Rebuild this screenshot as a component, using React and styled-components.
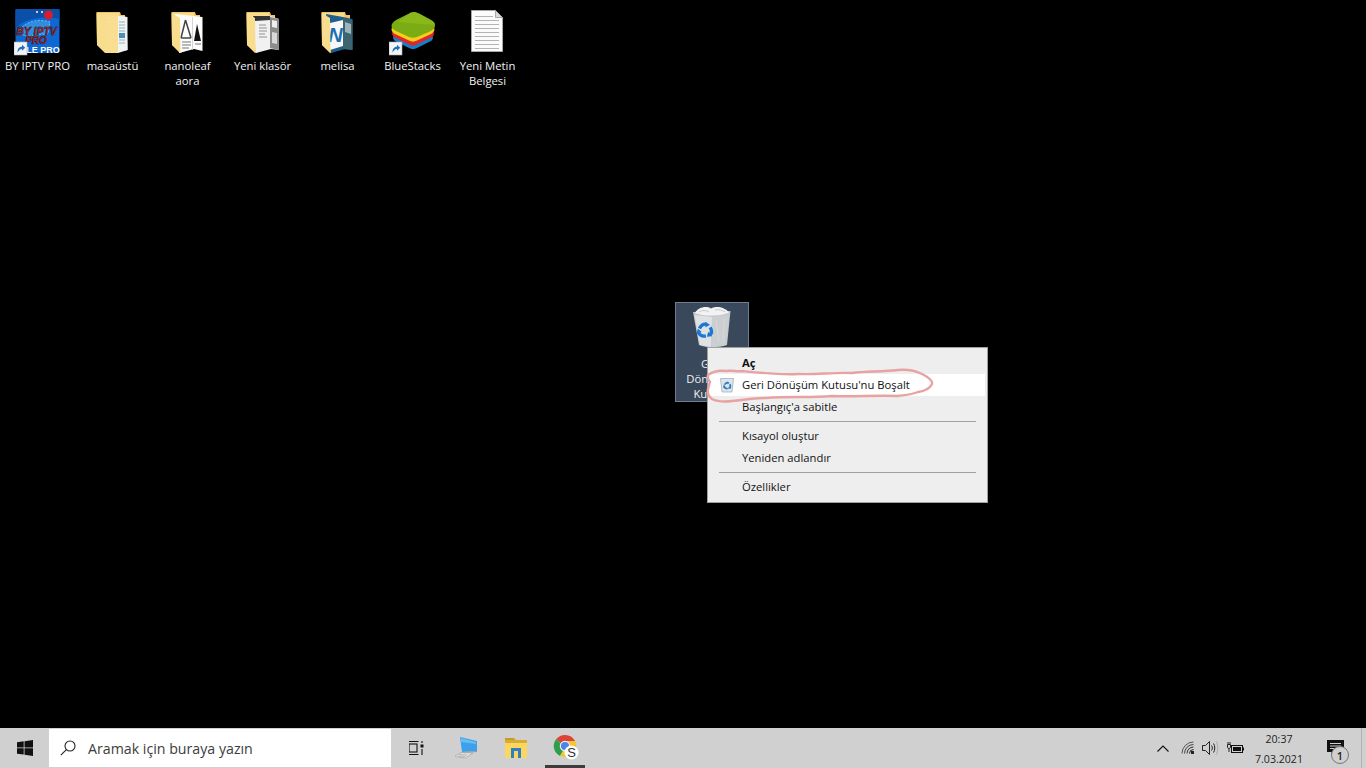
import React from 'react';
import styled, { createGlobalStyle } from 'styled-components';

const GlobalStyle = createGlobalStyle`
  html, body {
    margin: 0;
    padding: 0;
    background: #000;
    overflow: hidden;
  }
  * {
    box-sizing: border-box;
  }
`;

const ShortcutBadge = () => (
  <g>
    <rect x="0" y="34" width="13" height="13" fill="#f4f4f4" stroke="#a8b0b8" strokeWidth="0.6" />
    <path d="M3.5 44.5 C3.5 40.5 5.5 38.8 8 38.6 L8 36.8 L11.2 39.8 L8 42.8 L8 41 C6.4 41 5 42 3.5 44.5 Z" fill="#1f6fc4" />
  </g>
);

const IptvIcon = () => (
  <svg width="48" height="48" viewBox="0 0 48 48">
    <rect x="1.5" y="1" width="44" height="44" rx="2" fill="#0d68d2" />
    <path d="M1.5 20 C10 11 28 7 45.5 11 L45.5 1 L1.5 1 Z" fill="#0a4fa8" />
    <path d="M6 22 C10 14 24 10 36 14 L34 26 L10 28 Z" fill="#2f8ee0" stroke="#8cc8f5" strokeWidth="0.8" strokeDasharray="2 1.5" />
    <circle cx="34.5" cy="7" r="4.5" fill="#d81c2c" />
    <circle cx="23" cy="4" r="1" fill="#fff" />
    <circle cx="28" cy="4" r="1" fill="#fff" />
    <IptvText x="22.5" y="27" $size="10.5">BY IPTV</IptvText>
    <IptvText x="22" y="36" $size="10">PRO</IptvText>
    <LeProText x="29" y="44.5">LE PRO</LeProText>
    <ShortcutBadge />
  </svg>
);

const FolderShape = ({ children, flap = '#f9dd8f' }) => (
  <svg width="48" height="48" viewBox="0 0 48 48">
    <path d="M7.5 4 L31 4 L32 7 L36 7 L36 37 L16 45 L8 37 Z" fill="#eec565" />
    <path d="M8.5 5 L30 5 L31 10 L35 10 L35 14 L8.5 14 Z" fill="#f8dc8c" />
    {children}
    <path d="M7.5 5 L16 10 L16.5 45 L8 37 Z" fill={flap} />
  </svg>
);

const DocFolderIcon = () => (
  <FolderShape>
    <path d="M16 10 L30 8 L38.5 9 L38.5 42 L24 45 L16 45 Z" fill="#f4f2e8" />
    <path d="M16 10 L29 8 L29 45 L16 45 Z" fill="#f9dd90" />
    <path d="M29 8 L37.5 9 L38.5 42 L29 45 Z" fill="#eef3f4" />
    <path d="M30 14 H36 M30 17 H36 M30 20 H36 M30 23 H36 M30 32 H36 M30 35 H36" stroke="#9cb0bc" strokeWidth="1" />
    <rect x="30" y="25" width="6" height="5" fill="#4f8fb8" />
  </FolderShape>
);

const NanoFolderIcon = () => (
  <FolderShape>
    <path d="M11 6 L29 8 L38.5 9 L38.5 43 L30 41 L15 45 Z" fill="#fdfdfd" />
    <path d="M28.5 9 L28.5 42" stroke="#c9c9c9" strokeWidth="0.8" />
    <path d="M21.5 12 L17 30 M21.5 12 L27 30 M17 30 H27" stroke="#444" strokeWidth="1.5" fill="none" />
    <path d="M33 16 L30 33 H37 Z" fill="#111" />
    <path d="M18 34 H27 M18 37 H27 M18 40 H25 M31 36 H37" stroke="#777" strokeWidth="1.2" />
  </FolderShape>
);

const NewFolderIcon = () => (
  <FolderShape>
    <path d="M13 8 L31 8 L40 11 L40 42 L32 41 L17 45 Z" fill="#f1f1f1" />
    <path d="M31 9 L40 11 L40 42 L31 40 Z" fill="#8b8b8b" />
    <path d="M33 12 L38 13 L38 20 L33 19 Z" fill="#eee" />
    <path d="M33 24 L38 25 L38 36 L33 35 Z" fill="#d8d8d8" />
    <path d="M20 17 H27 M20 20 H28 M20 23 H28 M20 26 H26 M20 29 H28" stroke="#888" strokeWidth="0.9" />
    <path d="M14 8 L31 8 L31 12 L16 13 Z" fill="#333" />
  </FolderShape>
);

const MelisaFolderIcon = () => (
  <FolderShape>
    <path d="M12 6 L29 9 L38.5 11 L38.5 42 L31 41 L17 45 Z" fill="#1f5f8c" />
    <path d="M29 10 L38.5 12 L38.5 42 L29 41 Z" fill="#3d6470" />
    <path d="M31 14 L37 16 L37 26 L31 24 Z" fill="#9fb4b8" />
    <path d="M16 15 L29 12 L29 38 L16 42 Z" fill="#f6f8f9" />
    <NovelLetter x="21.5" y="34">N</NovelLetter>
  </FolderShape>
);

const BlueStacksIcon = () => (
  <svg width="48" height="48" viewBox="0 0 48 48">
    <path d="M24 18 C26 18 43 26 44 29 C44 32 42 33 40 34 L28 40 C25 41.5 23 41.5 20 40 L8 34 C6 33 4 32 4 29 C5 26 22 18 24 18 Z" fill="#1480c8" />
    <path d="M24 13 C26 13 44 22 45 25 C45 28 43 29 41 30 L28 36.5 C25 38 23 38 20 36.5 L7 30 C5 29 3 28 3 25 C4 22 22 13 24 13 Z" fill="#e0252c" />
    <path d="M24 8 C26 8 45 18 45.5 21 C45.5 24 43 25.5 41 26.5 L28 32.5 C25 34 23 34 20 32.5 L7 26.5 C5 25.5 2.5 24 2.5 21 C3 18 22 8 24 8 Z" fill="#f6d018" />
    <path d="M22 4.5 C25 3.5 27 4 30 5.5 L42 12 C45 13.5 46 15 46 18 C46 20 44 22 41 23.5 L28 29 C25 30 23 30 20 29 L7 23 C4 21.5 2.5 20 2.5 18 C2.5 16 4 14 7 12 Z" fill="#7cac14" />
    <path d="M22 4.5 C25 3.5 27 4 30 5.5 L42 12 C44 13 46 15 46 17 L8 14 Z" fill="#90bc1c" opacity="0.7" />
    <ShortcutBadge />
  </svg>
);

const TextFileIcon = () => (
  <svg width="48" height="48" viewBox="1 0 48 48">
    <path d="M8.5 2.5 H32.5 L39.5 9.5 V43.5 H8.5 Z" fill="#fbfbfb" stroke="#a8a8a8" />
    <path d="M32.5 2.5 V9.5 H39.5 Z" fill="#d8d8d8" stroke="#a8a8a8" />
    <path d="M12 8.5 H30 M12 12.5 H36 M12 16.5 H36 M12 20.5 H36 M12 24.5 H36 M12 28.5 H36 M12 32.5 H36 M12 36.5 H36 M12 40.5 H36" stroke="#b4b4b4" strokeWidth="1" />
  </svg>
);

// three bent arrows chasing each other, like the recycling mark
const RecycleGlyph = ({ x, y, s, color = '#1c76d2' }) => (
  <g transform={`translate(${x} ${y}) scale(${s})`} fill="none" stroke={color} strokeWidth="3.4">
    <path d="M3 6.5 C4.5 3.2 7 1.8 10.2 2.2" />
    <path d="M9 0 L13.5 2.8 L9 5.6 Z" fill={color} stroke="none" />
    <path d="M13.6 5.4 C15.6 8.4 15.4 11 13.4 13.2" />
    <path d="M15.6 14.2 L10.4 14.8 L11.6 9.8 Z" fill={color} stroke="none" />
    <path d="M9.4 14 C5.8 14.6 3.2 13.4 1.8 10.4" />
    <path d="M0 11.8 L1.4 6.6 L5.2 10 Z" fill={color} stroke="none" />
  </g>
);

const RecycleBinIcon = () => (
  <svg width="48" height="48" viewBox="0 0 48 48">
    <path d="M5 6 L42.5 5 L39 39 C30 42 19 42 11 39 Z" fill="#c4c9cc" />
    <path d="M7 7 C10 1.5 18 -0.5 23 2.5 C28 -0.5 37 1 41 6.5 C33 10.5 15 10.5 7 7 Z" fill="#f2f3f3" />
    <path d="M11 6 C14 4 18 4 21 6 M27 4 C31 3 34 4 37 6" stroke="#c6cacc" strokeWidth="1" fill="none" />
    <path d="M6.5 9 L24 11 L23 41 L12 39 Z" fill="#dfe2e4" />
    <path d="M24 11 L41 9 L38 39 L24 41 Z" fill="#cbcfd2" />
    <path d="M28 14 L31 36 M36 13 L35 36" stroke="#d6d9db" strokeWidth="1" />
    <RecycleGlyph x="8.5" y="16" s="1" />
  </svg>
);

const SmallBinIcon = () => (
  <svg width="16" height="16" viewBox="0 0 16 16">
    <path d="M1.5 1.5 H14.5 L13 15 H3 Z" fill="#dfe6ea" stroke="#9aa6ae" strokeWidth="0.7" />
    <RecycleGlyph x="4" y="4.5" s="0.5" color="#2a7bc8" />
  </svg>
);

const WindowsLogo = () => (
  <svg width="16" height="16" viewBox="0 0 16 16">
    <path fill="#111" d="M0 2.2 L6.7 1.3 V7.5 H0 Z M7.5 1.2 L16 0 V7.5 H7.5 Z M0 8.3 H6.7 V14.6 L0 13.7 Z M7.5 8.3 H16 V16 L7.5 14.8 Z" />
  </svg>
);

const SearchGlyph = () => (
  <svg width="16" height="16" viewBox="0 0 16 16" fill="none" stroke="#222" strokeWidth="1.1">
    <circle cx="10" cy="6" r="5" />
    <path d="M6.4 9.6 L0.8 15.2" />
  </svg>
);

const TaskViewGlyph = () => (
  <svg width="17" height="16" viewBox="1.5 0 17 16" fill="none" stroke="#111" strokeWidth="1.1">
    <path d="M0 1.5 H11 M0 14.5 H11" />
    <rect x="1.5" y="4" width="8" height="8" />
    <path d="M14.5 1 V3 M14.5 9 V15" />
    <rect x="13" y="4.5" width="3" height="3" fill="#111" stroke="none" />
  </svg>
);

const LaptopGlyph = () => (
  <svg width="26" height="24" viewBox="1 0 26 24">
    <path d="M6 1 L23 5 L23 15 L8 16 Z" fill="#3da0ea" />
    <path d="M7 2 L22 6 L22 8 L7 6 Z" fill="#66bdf4" />
    <path d="M8 16 L23 15 L23 16 L9 17 Z" fill="#8a9aa6" />
    <path d="M7 16.5 L19 17 L11 22 L0 20.5 Z" fill="#e2e2e2" stroke="#a4a4a4" strokeWidth="0.7" />
    <path d="M5 18.5 L13 19 M4 20 L11 20.5" stroke="#999" strokeWidth="0.6" />
  </svg>
);

const ExplorerGlyph = () => (
  <svg width="24" height="22" viewBox="0 0 24 22">
    <path d="M1 1 H10 L12 3.5 H1 Z" fill="#c79a2a" />
    <rect x="1" y="3" width="22" height="4" fill="#d9ac32" />
    <rect x="1" y="6" width="22" height="15" fill="#fbd661" />
    <path d="M7 11 H17 V21 H14 V14 H10 V21 H7 Z" fill="#2f80c0" />
  </svg>
);

const ChromeGlyph = () => (
  <svg width="28" height="28" viewBox="-2 0 28 28">
    <path d="M12 1 A11 11 0 0 1 22 7 L12 7 A5 5 0 0 0 7.5 9.5 L3.5 4.8 A11 11 0 0 1 12 1 Z" fill="#dc4437" />
    <path d="M3.5 4.8 L7.5 9.8 A5 5 0 0 0 10 17 L7 22 A11 11 0 0 1 3.5 4.8 Z" fill="#2f9e4a" />
    <path d="M12 7 H22 A11 11 0 0 1 12 23 L7 22 L10 17 A5 5 0 0 0 16.5 10 Z" fill="#f6c52c" />
    <circle cx="12" cy="12" r="4.6" fill="#4a86e8" stroke="#e8eef8" strokeWidth="1.1" />
    <circle cx="18.5" cy="18.5" r="7" fill="#fff" />
    <BadgeLetter x="18.5" y="23">S</BadgeLetter>
  </svg>
);

const WifiGlyph = () => (
  <svg width="14" height="14" viewBox="0 0 14 14" fill="none" stroke="#222">
    <path d="M1 12.5 A11.5 11.5 0 0 1 12.5 1" strokeWidth="1" opacity="0.7" />
    <path d="M3.5 12.5 A9 9 0 0 1 12.5 3.5" strokeWidth="1" opacity="0.8" />
    <path d="M6 12.5 A6.5 6.5 0 0 1 12.5 6" strokeWidth="1" opacity="0.9" />
    <path d="M8.5 12.5 A4 4 0 0 1 12.5 8.5" strokeWidth="1" />
    <rect x="10" y="10" width="3" height="3" fill="#222" stroke="none" />
  </svg>
);

const VolumeGlyph = () => (
  <svg width="17" height="16" viewBox="0 0 17 16" fill="none" stroke="#222" strokeWidth="1">
    <path d="M0.5 5.5 H3.5 L7.5 1.5 V14.5 L3.5 10.5 H0.5 Z" />
    <path d="M9.5 5.5 C10.6 7 10.6 9 9.5 10.5" />
    <path d="M11.5 3.5 C13.2 6 13.2 10 11.5 12.5" />
    <path d="M14 1 C16.4 5 16.4 11 14 15" stroke="#aaa" />
  </svg>
);

const BatteryGlyph = () => (
  <svg width="17" height="13" viewBox="0 0 17 13" fill="none" stroke="#111">
    <rect x="4.5" y="3.5" width="11" height="7" />
    <rect x="6" y="5" width="8" height="4" fill="#111" stroke="none" />
    <rect x="16" y="5.5" width="1" height="3" fill="#111" stroke="none" />
    <path d="M1 0 V2 M3 0 V2 M0.5 2.5 H3.5 V5 C3.5 6 2.8 6.5 2 6.5 C1.2 6.5 0.5 6 0.5 5 Z M2 6.5 V10" strokeWidth="0.9" />
  </svg>
);

const NotificationGlyph = () => (
  <svg width="20" height="16" viewBox="2 0 20 16">
    <path d="M0 0 H17 V12 H8 L4.5 15.5 V12 H0 Z" fill="#111" transform="translate(2 0)" />
    <path d="M5 3.5 H16 M5 6 H16 M5 8.5 H11" stroke="#d0d0d0" strokeWidth="1" />
  </svg>
);

const desktopIcons = [
  { label: 'BY IPTV PRO', Icon: IptvIcon },
  { label: 'masaüstü', Icon: DocFolderIcon },
  { label: 'nanoleaf aora', Icon: NanoFolderIcon },
  { label: 'Yeni klasör', Icon: NewFolderIcon },
  { label: 'melisa', Icon: MelisaFolderIcon },
  { label: 'BlueStacks', Icon: BlueStacksIcon },
  { label: 'Yeni Metin Belgesi', Icon: TextFileIcon },
];

const menuGroups = [
  [
    { label: 'Aç', bold: true },
    { label: "Geri Dönüşüm Kutusu'nu Boşalt", active: true, icon: true },
    { label: "Başlangıç'a sabitle" },
  ],
  [{ label: 'Kısayol oluştur' }, { label: 'Yeniden adlandır' }],
  [{ label: 'Özellikler' }],
];

export default function App() {
  return (
    <Screen>
      <GlobalStyle />
      <Desktop>
        <IconRow>
          {desktopIcons.map(({ label, Icon }) => (
            <DesktopIcon key={label}>
              <Icon />
              <IconLabel>{label}</IconLabel>
            </DesktopIcon>
          ))}
        </IconRow>

        <SelectedIcon>
          <RecycleBinIcon />
          <SelectedLabel>Geri Dönüşüm Kutusu</SelectedLabel>
        </SelectedIcon>

        <ContextMenu>
          {menuGroups.map((group, i) => (
            <React.Fragment key={i}>
              {i > 0 && <MenuSeparator />}
              {group.map((item) => (
                <MenuItem key={item.label} $active={item.active} $bold={item.bold}>
                  {item.icon && (
                    <MenuIcon>
                      <SmallBinIcon />
                    </MenuIcon>
                  )}
                  {item.label}
                </MenuItem>
              ))}
            </React.Fragment>
          ))}
          <Scribble width="232" height="38" viewBox="0 0 232 38">
            <path
              d="M2 8 C6 5 12 3 20 4 C26 3 31 5 36 4 C55 6 72 8 92 7 C110 8 128 5 146 6 C160 4 176 5 192 3 C202 2 210 4 216 7 C222 10 227 13 226 17 C224 21 220 24 212 25 C204 28 198 28 192 29 C170 28 148 30 126 29 C104 31 82 29 60 31 C46 31 38 33 26 34 C18 35 10 34 6 32 C2 29 1 26 2 22 C3 19 3 17 4 15 C2 12 1 10 2 8 Z"
              fill="none"
              stroke="#e8a2a2"
              strokeWidth="2.4"
            />
          </Scribble>
        </ContextMenu>
      </Desktop>

      <Taskbar>
        <StartButton>
          <WindowsLogo />
        </StartButton>
        <SearchBox>
          <SearchGlyph />
          <SearchText>Aramak için buraya yazın</SearchText>
        </SearchBox>
        <TaskButton $width={53}>
          <TaskViewGlyph />
        </TaskButton>
        <TaskButton>
          <LaptopGlyph />
        </TaskButton>
        <TaskButton>
          <ExplorerGlyph />
        </TaskButton>
        <TaskButton $width={50} $running>
          <ChromeGlyph />
        </TaskButton>
        <Tray>
          <TrayIcon $width={36}>
            <svg width="12" height="7" viewBox="0 0 12 7" fill="none" stroke="#111" strokeWidth="1.1">
              <path d="M0.5 6.5 L6 1 L11.5 6.5" />
            </svg>
          </TrayIcon>
          <TrayIcon $width={14}>
            <WifiGlyph />
          </TrayIcon>
          <TrayIcon $width={31}>
            <VolumeGlyph />
          </TrayIcon>
          <TrayIcon $width={19}>
            <BatteryGlyph />
          </TrayIcon>
          <Clock>
            <span>20:37</span>
            <span>7.03.2021</span>
          </Clock>
          <Notification>
            <NotificationGlyph />
            <NotificationCount>1</NotificationCount>
          </Notification>
          <ShowDesktop />
        </Tray>
      </Taskbar>
    </Screen>
  );
}

const Screen = styled.div`
  width: 1366px;
  height: 768px;
  display: flex;
  flex-direction: column;
  background: #000;
  font-family: 'Open Sans', 'Noto Sans', sans-serif;
`;

const Desktop = styled.div`
  position: relative;
  flex: 1;
  min-height: 0;
`;

const IconRow = styled.div`
  display: flex;
  align-items: flex-start;
  padding-top: 8px;
`;

const DesktopIcon = styled.div`
  width: 75px;
  display: flex;
  flex-direction: column;
  align-items: center;
`;

const IconLabel = styled.div`
  width: 72px;
  margin-top: 2px;
  color: #f2f2f2;
  font-size: 11.3px;
  line-height: 15px;
  text-align: center;
`;

const SelectedIcon = styled.div`
  position: absolute;
  left: 675px;
  top: 302px;
  width: 74px;
  height: 100px;
  padding-top: 0;
  display: flex;
  flex-direction: column;
  align-items: center;
  background: #39485a;
  border: 1px solid #6e7e8e;
  svg {
    flex: none;
    margin-top: 3px;
  }
`;

const SelectedLabel = styled.div`
  width: 66px;
  margin-top: 2px;
  color: #f2f2f2;
  font-size: 11.3px;
  line-height: 15px;
  text-align: center;
`;

const ContextMenu = styled.div`
  position: absolute;
  left: 707px;
  top: 347px;
  width: 281px;
  height: 156px;
  padding: 4px 2px 4px 1px;
  background: #eeeeee;
  border: 1px solid #a0a0a0;
  display: flex;
  flex-direction: column;
`;

const MenuItem = styled.div`
  position: relative;
  height: 22px;
  flex: none;
  padding: 0 0 2px 33px;
  display: flex;
  align-items: center;
  color: #111;
  font-size: 11.25px;
  font-weight: ${(p) => (p.$bold ? 700 : 400)};
  background: ${(p) => (p.$active ? '#ffffff' : 'transparent')};
`;

const MenuIcon = styled.span`
  position: absolute;
  left: 10px;
  top: 3px;
  width: 16px;
  height: 16px;
`;

const MenuSeparator = styled.div`
  flex: none;
  height: 1px;
  margin: 3px 9px 3px 10px;
  background: #a0a0a0;
`;

const Scribble = styled.svg`
  position: absolute;
  left: -2px;
  top: 19px;
  overflow: visible;
  pointer-events: none;
`;

const Taskbar = styled.div`
  flex: none;
  height: 40px;
  display: flex;
  align-items: center;
  background: #d0d0d0;
`;

const StartButton = styled.div`
  width: 49px;
  height: 100%;
  display: flex;
  align-items: center;
  justify-content: center;
`;

const SearchBox = styled.div`
  width: 342px;
  height: 38px;
  padding-left: 11px;
  display: flex;
  align-items: center;
  gap: 12px;
  background: #fff;
`;

const SearchText = styled.span`
  color: #3c3c3c;
  font-size: 14.2px;
`;

const TaskButton = styled.div`
  position: relative;
  width: ${(p) => p.$width || 48}px;
  height: 100%;
  display: flex;
  align-items: center;
  justify-content: center;
  &::after {
    content: '';
    display: ${(p) => (p.$running ? 'block' : 'none')};
    position: absolute;
    left: 5px;
    right: 5px;
    bottom: 0;
    height: 3px;
    background: #3c3c3c;
  }
`;

const Tray = styled.div`
  margin-left: auto;
  height: 100%;
  display: flex;
  align-items: center;
`;

const TrayIcon = styled.div`
  width: ${(p) => p.$width}px;
  height: 100%;
  display: flex;
  align-items: center;
  justify-content: center;
`;

const Clock = styled.div`
  width: 68px;
  padding-top: 2px;
  display: flex;
  flex-direction: column;
  align-items: center;
  gap: 5px;
  color: #222;
  font-size: 10.6px;
  line-height: 15px;
`;

const Notification = styled.div`
  position: relative;
  width: 48px;
  height: 100%;
  display: flex;
  align-items: center;
  justify-content: center;
`;

const NotificationCount = styled.span`
  position: absolute;
  left: 18px;
  top: 18px;
  width: 18px;
  height: 18px;
  border: 1px solid #777;
  border-radius: 50%;
  display: flex;
  align-items: center;
  justify-content: center;
  background: #d0d0d0;
  color: #222;
  font-size: 11px;
  font-weight: 600;
`;

const ShowDesktop = styled.div`
  width: 5px;
  height: 100%;
  border-left: 1px solid #b4b4b4;
`;

const IptvText = styled.text`
  fill: #c92631;
  stroke: #111;
  stroke-width: 0.5px;
  font-family: 'Liberation Sans', sans-serif;
  font-weight: 700;
  font-style: italic;
  font-size: ${(p) => p.$size}px;
  text-anchor: middle;
`;

const LeProText = styled.text`
  fill: #fff;
  font-family: 'Liberation Sans', sans-serif;
  font-weight: 700;
  font-size: 9px;
  text-anchor: middle;
`;

const NovelLetter = styled.text`
  fill: #1f6db0;
  font-family: 'Liberation Sans', sans-serif;
  font-weight: 700;
  font-style: italic;
  font-size: 20px;
  text-anchor: middle;
`;

const BadgeLetter = styled.text`
  fill: #333;
  font-family: 'Liberation Sans', sans-serif;
  font-size: 13px;
  text-anchor: middle;
`;
